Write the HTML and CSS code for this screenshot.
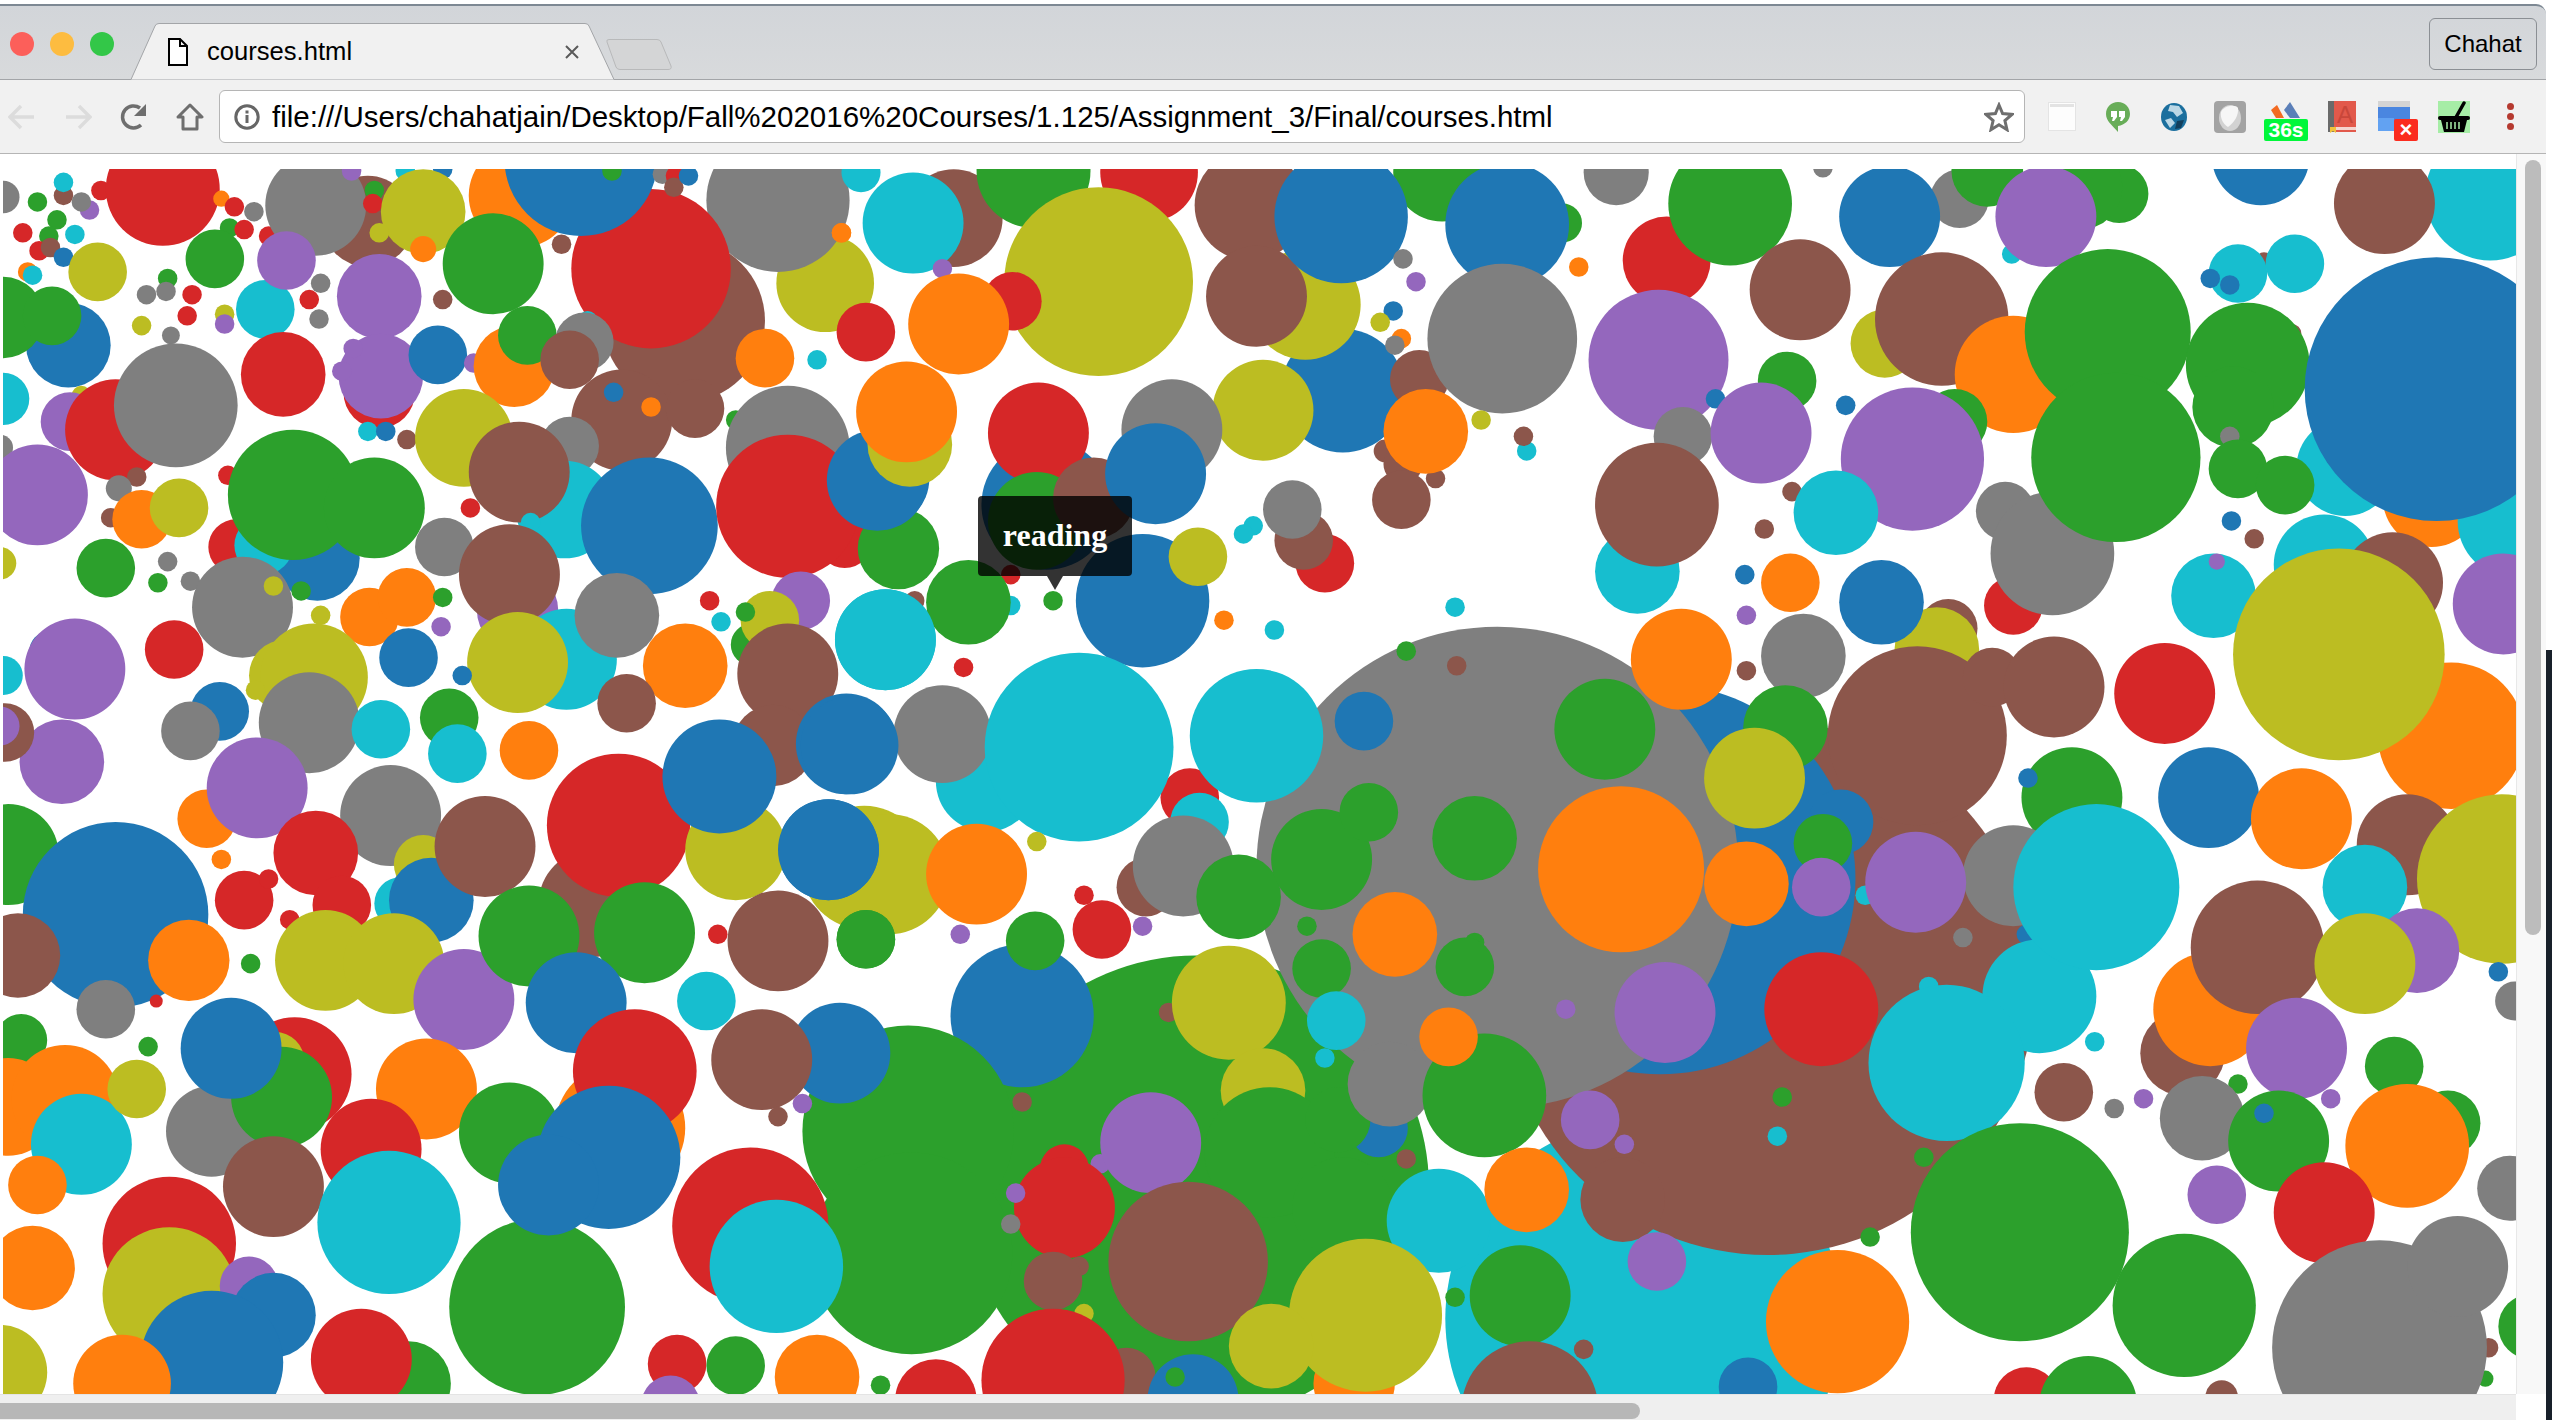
FILE: index.html
```html
<!DOCTYPE html>
<html>
<head>
<meta name="viewport" content="width=device-width, initial-scale=1">
<title>courses.html</title>
<link rel="stylesheet" href="styles.css">
</head>
<body>
<div class="window">
  <!-- Tab strip -->
  <div class="strip">
    <div class="lights">
      <span class="light light-red"></span>
      <span class="light light-yellow"></span>
      <span class="light light-green"></span>
    </div>
    <div class="tab">
      <svg class="tab-shape" width="485" height="57" viewBox="0 0 485 57"><path d="M0 56.5H1L25 3Q26 .5 29 .5H455Q458 .5 459 3L484 56.5H485" fill="#f1f1f1" stroke="#a3a5a8"/></svg>
      <svg class="doc-icon" width="20" height="28" viewBox="0 0 20 28"><path d="M1 1H12L19 8V27H1ZM12 1V8H19" fill="#fff" stroke="#000" stroke-width="2"/></svg>
      <span class="tab-title">courses.html</span>
      <svg class="tab-close" width="14" height="14" viewBox="0 0 14 14"><path d="M1 1L13 13M13 1L1 13" stroke="#5a5a5a" stroke-width="2"/></svg>
    </div>
    <svg class="new-tab" width="66" height="31" viewBox="0 0 66 31"><path d="M3 .5H51Q54 .5 55 3L65 27Q66 30.5 62 30.5H14Q11 30.5 10 28L1 3Q0 .5 3 .5Z" fill="#d4d5d6" stroke="#b8b9ba"/></svg>
    <div class="profile">Chahat</div>
  </div>

  <!-- Toolbar -->
  <div class="toolbar">
    <div class="nav">
      <div class="slot"><svg width="28" height="26" viewBox="0 0 28 26"><path d="M26 13H3M13 2L2 13L13 24" fill="none" stroke="#dcdcdc" stroke-width="3.5"/></svg></div>
      <div class="slot"><svg width="28" height="26" viewBox="0 0 28 26"><path d="M2 13H25M15 2L26 13L15 24" fill="none" stroke="#dcdcdc" stroke-width="3.5"/></svg></div>
      <div class="slot"><svg width="28" height="28" viewBox="0 0 28 28"><path d="M21 22A11 11 0 1 1 20 5" fill="none" stroke="#6e6e6e" stroke-width="3.5"/><path d="M26 1V13H14Z" fill="#6e6e6e"/></svg></div>
      <div class="slot"><svg width="28" height="28" viewBox="0 0 28 28"><path d="M14 2L26 14H21V26H7V14H2Z" fill="none" stroke="#6e6e6e" stroke-width="3" stroke-linejoin="round"/></svg></div>
    </div>
    <div class="omnibox">
      <svg class="info-icon" width="26" height="26" viewBox="0 0 26 26"><circle cx="13" cy="13" r="11.2" fill="none" stroke="#666" stroke-width="3"/><rect x="11.5" y="11" width="3" height="8" fill="#666"/><rect x="11.5" y="6.5" width="3" height="3" fill="#666"/></svg>
      <span class="url">file:///Users/chahatjain/Desktop/Fall%202016%20Courses/1.125/Assignment_3/Final/courses.html</span>
      <svg class="star" width="30" height="30" viewBox="0 0 30 30"><path d="M15 3L18.6 11.6L28 12.4L20.9 18.5L23 27.7L15 22.8L7 27.7L9.1 18.5L2 12.4L11.4 11.6Z" fill="none" stroke="#6e6e6e" stroke-width="3"/></svg>
    </div>
    <div class="extensions">
      <div class="slot"><svg width="28" height="29" viewBox="0 0 28 29"><rect x=".5" y=".5" width="27" height="28" fill="#fdfdfd" stroke="#e4e4e4"/><rect x="2" y="2" width="24" height="3" fill="#e3e3e3"/></svg></div>
      <div class="slot"><svg width="24" height="30" viewBox="0 0 24 30"><path d="M12 0C5 0 0 5 0 12C0 19 6 23 12 30V24C19 23 24 18 24 12C24 5 19 0 12 0Z" fill="#68ad58"/><path d="M5 9H11V15L8 19H6L7 15H5ZM13 9H19V15L16 19H14L15 15H13Z" fill="#fff"/></svg></div>
      <div class="slot"><svg width="26" height="28" viewBox="0 0 26 28"><ellipse cx="13" cy="14" rx="13" ry="14" fill="#1b6f9e"/><path d="M9 2L18 3L22 10L16 14L12 9L7 8ZM4 17L10 15L14 20L9 25Z" fill="#bcd8e6"/><path d="M16 18L23 17L20 25L14 26Z" fill="#123f5c"/></svg></div>
      <div class="slot"><svg width="32" height="32" viewBox="0 0 32 32"><rect width="32" height="32" rx="4" fill="#a3a3a3"/><ellipse cx="16" cy="17" rx="11" ry="13" fill="#d2d2d2"/><path d="M7 11C10 4 22 3 24 7C25 14 20 22 14 26C9 23 6 17 7 11Z" fill="#f6f6f6"/></svg></div>
      <div class="slot"><div class="timer">
        <svg width="32" height="20" viewBox="0 0 32 20"><path d="M1 9L7 4L14 17H6Z" fill="#f26a21"/><path d="M14 9L20 1L30 17H20Z" fill="#5a7fb8"/></svg>
        <span class="timer-badge">36s</span>
      </div></div>
      <div class="slot"><svg width="28" height="32" viewBox="0 0 28 32"><rect width="28" height="31" fill="#e2594b"/><rect width="6" height="31" fill="#6a6a6a"/><rect x="6" y="26" width="22" height="3" fill="#f5d5cf"/><path d="M2 26H8V32L5 30L2 32Z" fill="#f2c23c"/><text x="9" y="22" class="book-letter">A</text></svg></div>
      <div class="slot"><div class="calendar">
        <svg width="32" height="32" viewBox="0 0 32 32"><rect width="32" height="30" rx="2" fill="#4a86e0"/><rect width="32" height="6" fill="#d4d4d4"/><rect y="17" width="16" height="13" fill="#62a2f2"/></svg>
        <span class="calendar-badge">×</span>
      </div></div>
      <div class="slot"><svg width="32" height="32" viewBox="0 0 32 32"><rect width="32" height="32" fill="#a6eda6"/><path d="M17 18L26 2" stroke="#000" stroke-width="3.5" stroke-linecap="round"/><rect y="15" width="32" height="4" rx="2"/><path d="M3 19H29L26 31H6Z"/><path d="M9 21V28M13 21V28M17 21V28M21 21V28" stroke="#a6eda6" stroke-width="1.5"/></svg></div>
      <div class="slot dots"><i></i><i></i><i></i></div>
    </div>
  </div>

  <!-- Page -->
  <div class="viewport">
    <div class="page">
      <svg id="bubbles" class="bubbles" width="2513" height="1225" viewBox="1.84 103.8 1544 752.6"></svg>
      <div class="tooltip">reading</div>
    </div>
    <div class="vscroll"><div class="vthumb"></div></div>
  </div>
  <div class="hscroll"><div class="hthumb"></div></div>
</div>
<div class="desktop"></div>
<script src="bubbles.js"></script>
</body>
</html>
```

FILE: styles.css
```css
body {
  margin: 0;
  display: flex;
  width: 2552px;
  height: 1420px;
  overflow: hidden;
  font-family: "Liberation Sans", sans-serif;
  background: #fff;
}
.window {
  width: 2546px;
  background: #fff;
}
.desktop {
  width: 6px;
  background: linear-gradient(#fff 650px, #18202a 650px);
}
.strip {
  display: flex;
  align-items: flex-end;
  height: 73px;
  margin-top: 4px;
  border-top: 2px solid #7d8893;
  border-bottom: 1px solid #a3a5a8;
  border-top-right-radius: 10px;
  background: linear-gradient(#d2d5d9, #d8dadc);
}
.lights {
  display: flex;
  gap: 16px;
  width: 120px;
  margin-left: 10px;
  align-self: flex-start;
  padding-top: 26px;
}
.light {
  width: 24px;
  height: 24px;
  border-radius: 50%;
}
.light-red { background: #fc5f5a; }
.light-yellow { background: #fdbc40; }
.light-green { background: #33c748; }
.tab {
  position: relative;
  display: flex;
  align-items: center;
  width: 485px;
  height: 57px;
  margin-bottom: -1px;
}
.tab-shape {
  position: absolute;
  top: 0;
  left: 0;
}
.doc-icon {
  position: relative;
  margin-left: 38px;
}
.tab-title {
  position: relative;
  margin-left: 19px;
  font-size: 25.6px;
  color: #000;
}
.tab-close {
  position: absolute;
  left: 435px;
  top: 22px;
}
.new-tab {
  margin-left: -9px;
  margin-bottom: 9px;
}
.profile {
  display: flex;
  align-items: center;
  justify-content: center;
  box-sizing: border-box;
  width: 108px;
  height: 52px;
  margin-left: auto;
  margin-right: 9px;
  margin-bottom: 9px;
  border: 1px solid #8b8f94;
  border-radius: 6px;
  font-size: 24px;
  color: #000;
}
.toolbar {
  display: flex;
  align-items: center;
  height: 73px;
  background: #f1f1f1;
  border-bottom: 1px solid #b5b5b5;
}
.nav, .extensions {
  display: flex;
  align-items: center;
}
.nav {
  margin-left: -6px;
}
.slot {
  display: flex;
  align-items: center;
  justify-content: center;
  width: 56px;
  height: 44px;
}
.omnibox {
  display: flex;
  align-items: center;
  box-sizing: border-box;
  width: 1806px;
  height: 53px;
  margin-left: 1px;
  margin-right: 9px;
  padding: 0 10px 0 14px;
  background: #fff;
  border: 1px solid #b5b5b5;
  border-radius: 6px;
}
.url {
  margin-left: 12px;
  font-size: 29.5px;
  color: #000;
  white-space: nowrap;
}
.star {
  margin-left: auto;
}
.timer {
  position: relative;
  width: 44px;
  height: 40px;
  margin-top: 8px;
}
.timer svg {
  position: absolute;
  top: 0;
  left: 6px;
}
.timer-badge {
  position: absolute;
  left: 0;
  bottom: 0;
  width: 44px;
  height: 22px;
  background: #00f73a;
  border-radius: 2px;
  color: #fff;
  font-size: 21px;
  font-weight: bold;
  line-height: 22px;
  text-align: center;
}
.book-letter {
  font-family: "Liberation Sans", sans-serif;
  font-size: 24px;
  fill: #c9473a;
}
.calendar {
  position: relative;
  width: 40px;
  height: 40px;
  margin-top: 8px;
}
.calendar svg {
  position: absolute;
  top: 0;
  left: 0;
}
.calendar-badge {
  position: absolute;
  right: 0;
  bottom: 0;
  width: 24px;
  height: 22px;
  background: #fb2c1f;
  border-radius: 2px;
  color: #fff;
  font-size: 22px;
  font-weight: bold;
  line-height: 22px;
  text-align: center;
}
.dots {
  flex-direction: column;
  gap: 3px;
}
.dots i {
  width: 7px;
  height: 7px;
  border-radius: 50%;
  background: #b53a30;
}
.viewport {
  display: flex;
  height: 1240px;
}
.page {
  position: relative;
  box-sizing: border-box;
  width: 2516px;
  padding: 15px 0 0 3px;
}
.bubbles {
  display: block;
}
.c-blue { fill: #1f77b4; }
.c-orange { fill: #ff7f0e; }
.c-green { fill: #2ca02c; }
.c-red { fill: #d62728; }
.c-purple { fill: #9467bd; }
.c-brown { fill: #8c564b; }
.c-gray { fill: #7f7f7f; }
.c-olive { fill: #bcbd22; }
.c-cyan { fill: #17becf; }
.tooltip {
  position: absolute;
  left: 978px;
  top: 342px;
  width: 154px;
  height: 80px;
  background: rgba(0, 0, 0, 0.8);
  border-radius: 4px;
  color: #fff;
  font-family: "Liberation Serif", serif;
  font-size: 32px;
  font-weight: bold;
  line-height: 78px;
  text-align: center;
}
.tooltip::after {
  content: "";
  position: absolute;
  left: 69px;
  top: 80px;
  border-top: 14px solid rgba(0, 0, 0, 0.8);
  border-left: 8px solid transparent;
  border-right: 8px solid transparent;
}
.vscroll {
  width: 29px;
  background: #f8f8f8;
  border-left: 1px solid #e8e8e8;
}
.vthumb {
  width: 16px;
  height: 775px;
  margin: 6px 0 0 8px;
  background: #bcbcbc;
  border-radius: 8px;
}
.hscroll {
  box-sizing: border-box;
  width: 2516px;
  height: 26px;
  padding-top: 8px;
  background: #efefef;
  border-top: 1px solid #e4e4e4;
}
.hthumb {
  width: 1640px;
  height: 16px;
  background: #b7b7b7;
  border-radius: 0 8px 8px 0;
}
```

FILE: bubbles.js
```js
// color, x, y, r  - drawn back to front
var bubbles = [
  // top left
  ["e",2,121,10],["g",23,124,6],["n",39,120,6],["c",39,112,6],["p",55,129,6],["e",50,124,6],["r",62,117,6],["g",35,135,6],
  ["r",14,143,6],["g",30,145,6],["c",46,144,6],["r",24,154,6],["n",31,152,6],["b",39,158,6],["o",17,167,6],["c",20,169,6],
  ["r",100,116,35],["y",60,167,18],["o",136,122,5],["r",144,127,6],["e",156,130,6],["g",141,140,6],["r",150,141,6],["r",165,145,6],
  ["g",132,159,18],["g",103,171,6],["e",90,181,6],["e",102,179,6],["r",118,181,6],["r",115,194,6],["y",138,193,6],["p",138,199,6],["y",87,200,6],["e",105,206,5.5],
  ["b",42,212,26],["g",2,195,25],["g",32,194,18],
  ["n",226,136,28],["e",194,126,31],["p",216,105,6],["c",249,105,6],["b",272,104,6],["g",230,117,6],["r",229,125,6],["y",260,130,26],["y",233,143,6],["o",260,153,8],
  ["o",320,120,32],
  ["y",507,174,30],["e",478,123,44],["n",420,197,50],["r",532,204,18],["o",517,143,6],["r",400,165,49],["b",357,98,47],["g",376,105,6],["g",303,162,31],
  ["n",345,150,6],["e",407,107,6],["r",415,108,6],["n",414,115,6],["b",423,108,6],
  ["c",163,190,18],["p",176,160,18],["e",197,174,6],["r",190,184,6],["e",196,196,6],["n",272,184,6],
  ["r",233,241,22],["p",233,182,26],["p",234,231,26],["p",217,214,6],["p",210,228,6],["c",226,265,6],["b",237,265,6],["n",250,270,6],
  ["b",269,218,18],["p",291,223,6],["o",316,225,25],["g",324,206,18],["c",361,197,6],["e",359,210,18],["n",350,221,18],
  ["n",382,258,31],["n",427,251,18],["b",377,241,6],["o",400,250,6],["o",470,220,18],["c",502,221,6],
  ["g",452,258,6],["e",484,275,38],
  // second band left
  ["c",2,245,16],["y",50,243,6],["p",43,259,18],["r",71,264,31],["n",84,293,6],["e",108,249,38],
  ["r",174,230,26],["e",0,275,8],["p",23,304,31],["r",140,292,6],
  ["n",68,318,6],["e",73,300,8],["o",87,319,18],["y",110,312,18],
  ["r",145,336,17],["b",195,343,26],["c",162,335,18],["g",180,304,40],["g",230,312,31],
  ["e",273,336,18],["r",289,312,6],["y",285,269,30],["e",350,274,18],["c",347,313,30],["n",319,290,31],["c",326,321,6],
  ["b",399,323,42],["r",519,332,17],["r",484,311,44],["b",541,294,30],
  ["g",65,349,18],["e",103,345,6],["g",97,358,6],["e",117,357,6],["y",0,346,10],
  ["g",185,363,6],["e",149,373,31],["y",168,360,6],["y",197,378,6],
  ["o",227,379,18],["o",250,367,18],["g",272,367,6],["p",271,385,6],["p",318,375,25],
  ["n",313,353,31],["c",348,405,31],["e",379,378,26],["b",251,404,18],["y",318,407,31],
  ["r",436,369,6],["c",443,382,6],["p",492,369,18],["g",462,396,13],["y",473,381,18],["g",458,376,6],
  ["o",421,409,26],["n",484,414,31],["c",544,393,31],
  ["b",30,400,12],["p",46,411,31],["r",107,399,18],["c",2,415,12],
  ["y",175,415,22],["y",193,416,33],["y",157,424,6],["e",190,444,31],["b",135,437,18],["e",117,449,18],
  ["b",284,415,6],["g",276,441,18],["c",281,463,18],["c",234,448,18],["o",325,461,18],["n",385,432,18],
  ["n",475,458,25],["b",520,457,31],["p",38,468,26],["n",3,450,18],["p",0,446,12],
  // top centre
  ["c",529,106,12],["n",586,134,30],["c",561,137,31],["p",579,165,6],["g",635,105,35],["r",706,106,30],["o",517,143,6],
  ["y",675,173,58],["r",622,185,18],["o",589,199,31],
  ["b",825,240,38],["g",886,106,30],["y",802,187,34],["n",768,126,34],["n",772,182,31],["b",824,133,41],
  ["g",960,137,12],["b",926,138,38],["e",993,106,20],["r",1024,160,27],
  ["y",776,252,31],["n",872,233,18],["e",923,208,46],["p",1019,221,43],
  ["e",862,159,6],["p",870,173,6],["b",856,191,6],["y",848,198,6],["o",861,208,6],["e",857,212,6],["o",970,164,6],
  ["n",851,277,7],["n",862,285,12],["n",882,294,6],["n",861,307,18],["o",876,265,26],
  ["y",910,258,6],["c",938,277,6],["n",936,268,6],
  ["b",643,310,40],["g",552,337,25],["b",539,295,31],["y",559,273,26],["o",557,253,31],["r",638,266,31],["g",637,320,30],["n",672,306,25],["e",720,264,31],["b",710,291,31],
  ["r",814,346,18],["n",801,332,18],["e",794,313,18],["c",770,323,6],["c",764,328,6],
  ["b",702,369,41],["y",736,342,18],["r",621,353,6],
  ["n",562,369,6],["c",621,372,6],["g",595,370,26],["g",647,369,6],["c",544,393,31],
  ["o",752,381,6],["c",783,387,6],["c",894,373,6],["r",592,410,6],
  ["c",1006,351,26],["e",1034,268,18],["n",1018,310,38],
  // top right
  ["c",1530,120,40],["e",1204,122,18],["g",1221,105,22],["g",1302,119,18],["g",1278,115,26],["c",1236,156,6],["p",1257,133,31],
  ["b",1389,96,30],["n",1465,125,31],["g",1063,125,38],["b",1161,133,31],["e",1120,103,6],
  ["n",1106,178,31],["y",1158,211,21],["n",1193,196,41],["o",1237,230,36],["g",1295,204,51],
  ["n",1391,160,5],["c",1375,168,18],["c",1410,162,18],["b",1358,171,6],["b",1370,175,6],
  ["c",1441,287,30],["o",1494,306,30],["c",1545,320,35],["n",1408,205,6],["g",1381,224,38],["g",1372,250,25],["e",1370,268,6],["g",1375,288,18],["g",1404,298,18],["b",1497,239,81],
  ["g",1098,234,18],["b",1134,249,6],["b",1054,245,6],["p",1082,266,31],["g",1201,259,20],["p",1175,282,44],["n",1101,302,6],["c",1128,315,26],["n",1084,325,6],
  ["e",1232,314,18],["r",1237,372,18],["e",1261,340,38],["g",1300,281,52],
  ["b",1371,320,6],["n",1385,331,6],
  // big background shapes
  ["c",1010,810,122],["g",735,730,143],["n",1086,607,164],["b",1020,540,120],
  ["r",731,490,18],["c",737,505,18],
  ["e",920,533,148],
  ["b",838,443,18],["g",864,400,6],["n",895,409,6],["g",986,448,31],["o",1033,405,31],
  ["o",1100,358,18],["b",1072,353,6],["p",1073,378,6],["n",1073,412,6],["e",1108,403,26],["n",1197,386,18],["y",1190,399,26],["b",1156,370,26],
  ["g",1097,447,26],["n",1178,452,55],["n",1224,416,18],["n",1262,422,31],["r",1330,426,31],
  ["c",1360,366,26],["p",1362,345,5],["c",1428,347,31],["n",1470,358,31],["p",1538,371,31],["o",1506,452,45],["y",1437,402,65],
  ["b",1131,505,20],["y",1078,478,31],["g",1120,518,18],["p",1119,545,18],["o",1073,543,26],["c",1146,550,6],
  // lower centre
  ["c",606,480,31],["e",579,451,30],["b",522,458,30],["c",663,459,58],["c",772,452,41],
  ["y",531,533,38],["y",546,537,37],["b",509,522,31],["o",600,537,31],["y",637,517,6],["g",532,577,18],
  ["n",704,545,18],["e",727,532,31],["g",761,551,26],["r",666,550,6],["r",677,571,18],["p",702,569,6],["p",590,574,6],
  ["b",628,624,44],["g",636,578,18],
  ["g",558,695,65],["g",560,770,62],
  ["n",628,677,6],["n",718,622,6],["y",755,616,35],["y",776,670,26],["g",780,708,40],["b",847,693,18],["g",822,688,20],["e",854,666,26],
  ["n",864,712,6],
  ["p",676,715,6],["p",707,702,31],["r",654,718,15],["r",654,742,31],["p",624,733,6],["e",621,752,6],
  ["n",663,778,6],["n",647,787,18],["y",666,807,6],
  ["g",825,742,31],["n",730,775,49],["c",884,750,32],
  ["g",812,528,31],["g",841,499,18],["g",906,515,26],["o",996,534,51],["g",803,569,6],["o",857,574,26],["g",812,595,18],
  ["g",906,579,6],["g",900,594,18],["c",821,627,18],["c",814,650,6],["g",912,673,38],["o",890,637,18],
  ["p",962,620,6],["p",1023,622,31],["p",977,688,18],["p",998,703,6],["n",997,737,26],["o",938,731,26],["p",1018,775,18],
  ["g",934,796,31],["g",894,797,6],["n",973,829,6],["n",940,866,42],
  ["o",832,850,25],["y",839,808,47],["y",781,827,26],
  ["n",692,846,18],["r",647,848,44],["b",733,860,28],["g",722,846,6],["r",575,860,25],["g",541,851,6],
  // lower left
  ["g",5,525,31],["b",71,562,57],["o",116,590,25],["r",96,615,4],["n",11,587,26],["e",65,620,18],
  ["o",127,503,18],["p",158,484,31],["e",240,501,31],["r",194,524,26],["o",136,528,6],["r",150,553,18],["r",165,540,6],["r",210,556,18],["r",178,565,6],
  ["c",246,555,16],["y",260,531,18],["b",265,553,26],["n",298,520,31],["y",200,590,31],["y",242,592,31],["p",285,614,31],["g",154,592,6],
  ["g",13,639,16],["o",5,680,30],["o",40,675,33],["c",50,703,31],["y",84,669,18],["g",91,643,6],["o",23,728,18],
  ["e",130,695,28],["r",181,660,35],["y",169,652,18],["g",173,674,31],["b",142,644,31],["n",168,729,31],
  ["o",262,669,31],["r",228,706,31],["g",313,696,31],["c",239,751,44],
  ["r",104,764,41],["y",104,795,41],["p",153,790,18],["b",168,808,26],["b",130,837,44],["o",20,779,26],["y",0,843,29],["o",75,850,30],
  ["g",251,850,26],["r",222,835,31],["g",330,803,54],["r",416,838,18],["g",452,839,18],["o",502,846,26],["p",412,863,18],
  ["n",364,555,33],["r",380,507,44],["g",325,575,31],["g",396,573,31],["b",354,616,31],["c",434,615,18],
  ["o",381,693,40],["r",390,658,38],["b",374,711,44],["b",337,728,31],
  ["y",452,522,31],["b",442,477,35],["b",509,522,31],["n",478,578,31],["g",532,577,18],["r",441,574,6],
  ["b",516,647,31],["n",468,651,31],["p",493,678,6],["n",478,686,6],
  ["r",461,753,48],["c",477,778,41],
  // lower right
  ["g",1273,490,31],["b",1246,478,6],["b",1357,490,31],["o",1414,503,31],
  ["n",1479,519,31],["c",1453,545,26],["y",1537,540,52],["b",1245,574,6],
  ["e",1237,538,31],["p",1177,542,31],["e",1206,576,6],["c",1253,612,35],["c",1288,545,51],["c",1185,606,6],["c",1196,653,48],["r",1119,620,35],
  ["g",1095,674,6],["c",1092,698,6],["g",1182,711,6],["g",1149,760,6],["o",1129,812,44],["b",1074,852,18],
  ["n",1341,647,26],["o",1358,620,35],["n",1387,582,41],["p",1485,584,26],["y",1453,592,31],["b",1535,597,6],["e",1545,615,12],
  ["p",1411,644,31],["g",1471,655,18],["g",1504,690,20],["o",1479,704,38],
  ["g",1375,666,6],["p",1432,675,6],["p",1317,675,6],["e",1299,681,6],["n",1268,671,18],["c",1287,640,6],
  ["e",1353,687,26],["g",1400,701,31],["b",1391,684,6],["r",1428,745,31],["p",1362,734,18],["e",1542,730,20],
  ["g",1555,815,20],["n",1529,828,6],["g",1527,847,5],["e",1462,828,66],["e",1510,778,31],
  ["g",1342,802,44],["g",1241,757,67],["r",1245,860,20],["g",1283,863,30],["n",1365,858,10]
];

var names = {b: "blue", o: "orange", g: "green", r: "red", p: "purple", n: "brown", e: "gray", y: "olive", c: "cyan"};
var svg = document.getElementById("bubbles");
bubbles.forEach(function (d) {
  var c = document.createElementNS("http://www.w3.org/2000/svg", "circle");
  c.setAttribute("class", "c-" + names[d[0]]);
  c.setAttribute("cx", d[1]);
  c.setAttribute("cy", d[2]);
  c.setAttribute("r", d[3]);
  svg.appendChild(c);
});
```
